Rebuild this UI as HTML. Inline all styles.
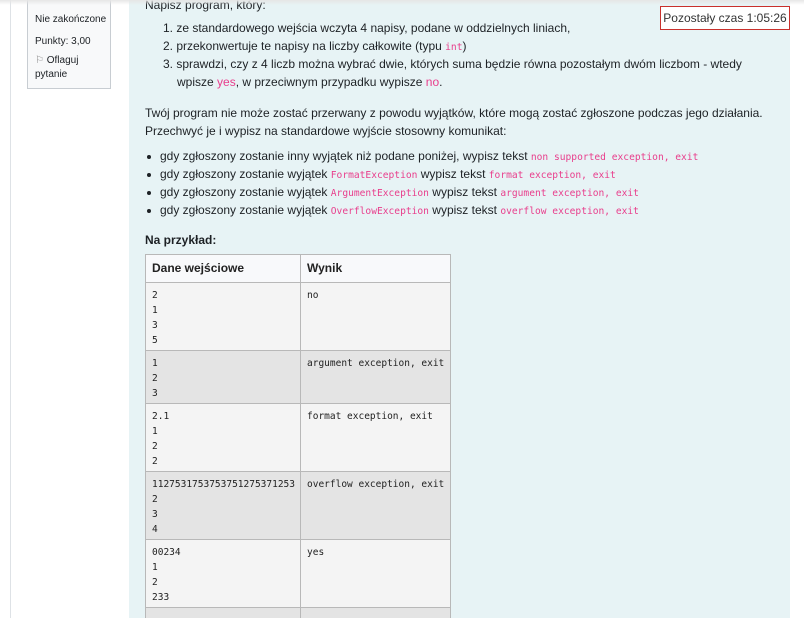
<!DOCTYPE html>
<html><head><meta charset="utf-8"><style>
*{margin:0;padding:0;box-sizing:border-box}
html,body{width:804px;height:618px;overflow:hidden}
body{background:#fff;font-family:"Liberation Sans",sans-serif;font-size:12px;color:#1d2125;position:relative}
.vline{position:absolute;left:10px;top:0;width:1px;height:618px;background:#dee2e6}
.side{position:absolute;left:27px;top:-10px;width:84px;height:99px;border:1px solid #c8cdd2;background:#f8f9fa;font-size:10px;padding:4px 6px;color:#1d2125}
.side div{position:absolute;left:7px}
.main{position:absolute;left:129px;top:0;width:661px;height:618px;background:#e7f3f5}
.shadow{position:absolute;left:0;top:0;width:804px;height:5px;background:linear-gradient(#e6e6e6,rgba(255,255,255,0))}
.t{position:absolute;white-space:nowrap;line-height:18px}
code{font-family:"DejaVu Sans Mono",monospace;font-size:9.6px;color:#e83e8c}
.timer{position:absolute;left:660px;top:6px;width:130px;height:24px;border:1px solid #c9302c;background:#fff;font-size:12px;color:#333;text-align:center;line-height:22px}
table{position:absolute;left:145px;top:254px;border-collapse:collapse;table-layout:fixed;width:305px}
td,th{border:1px solid #b8b8b8;vertical-align:top;text-align:left;padding:5px 4px 2px 6px;font-family:"DejaVu Sans Mono",monospace;font-size:9.5px;line-height:15px;color:#222;white-space:nowrap;overflow:hidden}
th{font-family:"Liberation Sans",sans-serif;font-weight:bold;font-size:12px;background:#f8f9fb;height:28px;padding:5px 6px;line-height:17px}
td{background:#f4f4f4}
tr.g td{background:#e4e4e4}
.bul{position:absolute;left:147px;width:4px;height:4px;border-radius:50%;background:#1d2125}
</style></head><body>
<div class="vline"></div>
<div class="side">
<div style="top:-2px">Pytanie 3</div>
<div style="top:23px">Nie zakończone</div>
<div style="top:45px">Punkty: 3,00</div>
<div style="top:64px;color:#1d2125"><span style="color:#888">⚐</span> Oflaguj</div>
<div style="top:78px">pytanie</div>
</div>
<div class="main"></div>
<div class="t" style="left:145px;top:-4px">Napisz program, który:</div>
<div class="t" style="left:163px;top:19px">1. ze standardowego wejścia wczyta 4 napisy, podane w oddzielnych liniach,</div>
<div class="t" style="left:163px;top:37px">2. przekonwertuje te napisy na liczby całkowite (typu <code>int</code>)</div>
<div class="t" style="left:163px;top:55px">3. sprawdzi, czy z 4 liczb można wybrać dwie, których suma będzie równa pozostałym dwóm liczbom - wtedy</div>
<div class="t" style="left:177px;top:73px">wpisze <code style="font-family:inherit;font-size:12px">yes</code>, w przeciwnym przypadku wypisze <code style="font-family:inherit;font-size:12px">no</code>.</div>
<div class="t" style="left:145px;top:104px">Twój program nie może zostać przerwany z powodu wyjątków, które mogą zostać zgłoszone podczas jego działania.</div>
<div class="t" style="left:145px;top:122px">Przechwyć je i wypisz na standardowe wyjście stosowny komunikat:</div>
<div class="bul" style="top:155px"></div><div class="t" style="left:160px;top:147px">gdy zgłoszony zostanie inny wyjątek niż podane poniżej, wypisz tekst <code>non supported exception, exit</code></div>
<div class="bul" style="top:173px"></div><div class="t" style="left:160px;top:165px">gdy zgłoszony zostanie wyjątek <code>FormatException</code> wypisz tekst <code>format exception, exit</code></div>
<div class="bul" style="top:191px"></div><div class="t" style="left:160px;top:183px">gdy zgłoszony zostanie wyjątek <code>ArgumentException</code> wypisz tekst <code>argument exception, exit</code></div>
<div class="bul" style="top:209px"></div><div class="t" style="left:160px;top:201px">gdy zgłoszony zostanie wyjątek <code>OverflowException</code> wypisz tekst <code>overflow exception, exit</code></div>
<div class="t" style="left:145px;top:231px;font-weight:bold">Na przykład:</div>
<table>
<colgroup><col style="width:155px"><col style="width:150px"></colgroup>
<tr><th>Dane wejściowe</th><th>Wynik</th></tr>
<tr><td>2<br>1<br>3<br>5</td><td>no</td></tr>
<tr class="g"><td>1<br>2<br>3</td><td>argument exception, exit</td></tr>
<tr><td>2.1<br>1<br>2<br>2</td><td>format exception, exit</td></tr>
<tr class="g"><td>1127531753753751275371253<br>2<br>3<br>4</td><td>overflow exception, exit</td></tr>
<tr><td>00234<br>1<br>2<br>233</td><td>yes</td></tr>
<tr class="g"><td style="height:30px"></td><td></td></tr>
</table>
<div class="timer">Pozostały czas 1:05:26</div>
<div class="shadow"></div>
</body></html>
